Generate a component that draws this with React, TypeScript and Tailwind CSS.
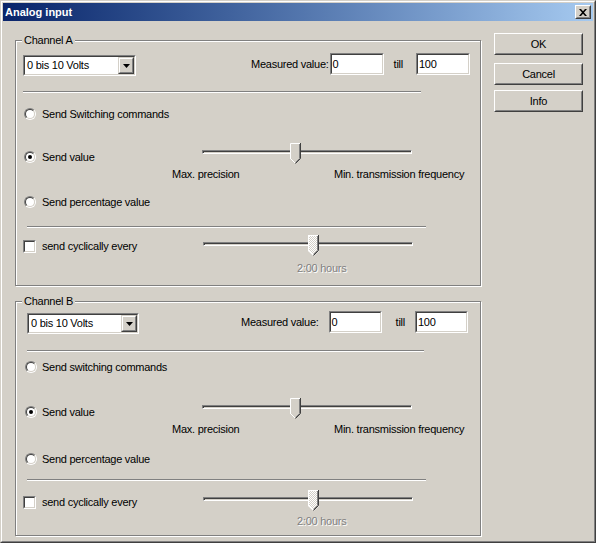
import React from 'react';

type BoxProps = { className?: string; children?: React.ReactNode };

// 2px sunken edge (text boxes, combo, checkbox)
const Sunken: React.FC<BoxProps> = ({ className = '', children }) => (
  <div className={`border border-t-[#808080] border-l-[#808080] border-r-white border-b-white ${className}`}>
    <div className="h-full w-full border border-t-[#404040] border-l-[#404040] border-r-[#d4d0c8] border-b-[#d4d0c8] bg-white">
      {children}
    </div>
  </div>
);

// 2px raised edge (buttons)
const Raised: React.FC<BoxProps> = ({ className = '', children }) => (
  <div className={`border border-t-white border-l-white border-r-[#404040] border-b-[#404040] ${className}`}>
    <div className="flex h-full w-full items-center justify-center border border-t-[#d4d0c8] border-l-[#d4d0c8] border-r-[#808080] border-b-[#808080] bg-[#d4d0c8]">
      {children}
    </div>
  </div>
);

const ComboArrow = () => (
  <div className="h-full w-[16px] border border-t-[#d4d0c8] border-l-[#d4d0c8] border-r-[#404040] border-b-[#404040]">
    <div className="flex h-full w-full items-center justify-center border border-t-white border-l-white border-r-[#808080] border-b-[#808080] bg-[#d4d0c8]">
      <svg width="7" height="4" viewBox="0 0 7 4">
        <path d="M0 0H7L3.5 4Z" fill="#000" />
      </svg>
    </div>
  </div>
);

const Combo: React.FC<{ className?: string }> = ({ className = '' }) => (
  <Sunken className={`h-[21px] ${className}`}>
    <div className="flex h-full items-center">
      <span className="flex-1 pl-[2px]">0 bis 10 Volts</span>
      <ComboArrow />
    </div>
  </Sunken>
);

const TextBox: React.FC<{ value: string; className?: string }> = ({ value, className = '' }) => (
  <Sunken className={`h-[22px] ${className}`}>
    <div className="flex h-full items-center pl-[1px]">{value}</div>
  </Sunken>
);

const Radio: React.FC<{ checked?: boolean }> = ({ checked }) => (
  <div className="h-[12px] w-[12px] shrink-0 rounded-full border border-t-[#808080] border-l-[#808080] border-r-white border-b-white">
    <div className="flex h-full w-full items-center justify-center rounded-full border border-t-[#404040] border-l-[#404040] border-r-[#d4d0c8] border-b-[#d4d0c8] bg-white">
      {checked && <div className="h-[4px] w-[4px] rounded-full bg-black" />}
    </div>
  </div>
);

const Separator: React.FC<{ className?: string }> = ({ className = '' }) => (
  <div className={`h-[2px] border-t border-t-[#808080] border-b border-b-white ${className}`} />
);

const Thumb: React.FC<{ disabled?: boolean; className?: string }> = ({ disabled, className = '' }) => (
  <svg width="11" height="21" viewBox="0 0 11 21" className={`absolute top-0 ${className}`}>
    <defs>
      <pattern id="hatch" width="2" height="2" patternUnits="userSpaceOnUse">
        <rect width="2" height="2" fill="#d4d0c8" />
        <rect width="1" height="1" fill="#fff" />
        <rect x="1" y="1" width="1" height="1" fill="#fff" />
      </pattern>
    </defs>
    <path d="M0 0H11V16L5.5 21L0 16Z" fill={disabled ? 'url(#hatch)' : '#d4d0c8'} />
    <polyline points="0.5,16 0.5,0.5 10,0.5" fill="none" stroke="#fff" />
    <polyline points="0.5,15.5 5,20" fill="none" stroke="#fff" />
    <polyline points="10.5,0 10.5,15.5 5.5,20.5" fill="none" stroke="#404040" />
    <polyline points="9.5,1 9.5,15.5 5.5,19.5" fill="none" stroke="#808080" />
  </svg>
);

const Slider: React.FC<{ thumb: string; disabled?: boolean }> = ({ thumb, disabled }) => (
  <div className="relative h-[21px] w-[210px]">
    <div className="mt-[7px] h-[4px] border border-t-[#808080] border-l-[#808080] border-r-white border-b-white bg-[#d4d0c8] shadow-[inset_1px_1px_0_#404040]" />
    <Thumb disabled={disabled} className={thumb} />
  </div>
);

const Button: React.FC<{ label: string; className?: string }> = ({ label, className = '' }) => (
  <Raised className={`h-[22px] w-[89px] ${className}`}>{label}</Raised>
);

const GroupBox: React.FC<BoxProps & { title: string }> = ({ title, className = '', children }) => (
  <div className={`relative w-[466px] border border-[#808080] shadow-[inset_1px_1px_0_#fff,1px_1px_0_#fff] ${className}`}>
    <span className="absolute -top-[8px] left-[6px] bg-[#d4d0c8] px-[2px] leading-[14px]">{title}</span>
    <div className="flex flex-col">{children}</div>
  </div>
);

const disabledText = 'text-[#808080] [text-shadow:1px_1px_0_#fff]';

export default function App() {
  return (
    <div className="h-[543px] w-[596px] border border-t-[#d4d0c8] border-l-[#d4d0c8] border-r-[#404040] border-b-[#404040] font-['Liberation_Sans',Arial,sans-serif] text-[11px] tracking-[-0.25px] text-black">
      <div className="flex h-full w-full flex-col border border-t-white border-l-white border-r-[#808080] border-b-[#808080] bg-[#d4d0c8] p-[1px]">
        {/* Title bar */}
        <div className="flex h-[18px] items-center bg-linear-to-r from-[#0a246a] to-[#a6caf0] pl-[2px] pr-[2px]">
          <span className="flex-1 font-bold tracking-normal text-white">Analog input</span>
          <Raised className="h-[14px] w-[16px]">
            <svg width="8" height="7" viewBox="0 0 8 7">
              <path d="M0 0H2L4 2.3 6 0H8L5 3.5 8 7H6L4 4.7 2 7H0L3 3.5Z" fill="#000" />
            </svg>
          </Raised>
        </div>

        <div className="flex">
          <div className="flex flex-col pl-[12px]">
            {/* Channel A */}
            <GroupBox title="Channel A" className="mt-[19px] h-[246px]">
              <div className="mt-[12px] flex h-[23px] items-start">
                <Combo className="ml-[7px] mt-[2px] w-[113px]" />
                <span className="ml-auto flex h-[22px] items-center">Measured value:</span>
                <TextBox value="0" className="ml-[1px] w-[54px]" />
                <span className="ml-[10px] flex h-[22px] items-center">till</span>
                <TextBox value="100" className="ml-[13px] mr-[10px] w-[54px]" />
              </div>
              <Separator className="ml-[7px] mt-[15px] w-[398px]" />
              <label className="mt-[13px] flex h-[16px] items-center gap-[6px] pl-[8px]">
                <Radio />
                Send Switching commands
              </label>
              <div className="mt-[21px] flex">
                <div className="w-[186px] pt-[6px]">
                  <label className="flex h-[16px] items-center gap-[6px] pl-[8px]">
                    <Radio checked />
                    Send value
                  </label>
                </div>
                <Slider thumb="left-[88px]" />
              </div>
              <div className="mt-[1px] flex h-[16px] items-center">
                <span className="ml-[156px] w-[162px]">Max. precision</span>
                <span>Min. transmission frequency</span>
              </div>
              <label className="mt-[12px] flex h-[16px] items-center gap-[6px] pl-[8px]">
                <Radio />
                Send percentage value
              </label>
              <Separator className="ml-[11px] mt-[16px] w-[399px]" />
              <div className="mt-[7px] flex">
                <div className="w-[187px] pt-[3px]">
                  <label className="flex h-[16px] items-center gap-[6px] pl-[7px]">
                    <Sunken className="h-[13px] w-[13px] shrink-0" />
                    send cyclically every
                  </label>
                </div>
                <Slider thumb="left-[105px]" disabled />
              </div>
              <div className={`mt-[4px] flex h-[16px] items-center pl-[281px] ${disabledText}`}>2:00 hours</div>
            </GroupBox>

            {/* Channel B */}
            <GroupBox title="Channel B" className="mt-[15px] h-[235px]">
              <div className="mt-[9px] flex h-[23px] items-start">
                <Combo className="ml-[11px] mt-[2px] w-[112px]" />
                <span className="ml-auto flex h-[22px] items-center">Measured value:</span>
                <TextBox value="0" className="ml-[10px] w-[53px]" />
                <span className="ml-[14px] flex h-[22px] items-center">till</span>
                <TextBox value="100" className="ml-[10px] mr-[12px] w-[53px]" />
              </div>
              <Separator className="ml-[11px] mt-[16px] w-[397px]" />
              <label className="mt-[7px] flex h-[16px] items-center gap-[5px] pl-[9px]">
                <Radio />
                Send switching commands
              </label>
              <div className="mt-[23px] flex">
                <div className="w-[186px] pt-[6px]">
                  <label className="flex h-[16px] items-center gap-[5px] pl-[9px]">
                    <Radio checked />
                    Send value
                  </label>
                </div>
                <Slider thumb="left-[88px]" />
              </div>
              <div className="mt-[1px] flex h-[16px] items-center">
                <span className="ml-[156px] w-[162px]">Max. precision</span>
                <span>Min. transmission frequency</span>
              </div>
              <label className="mt-[14px] flex h-[16px] items-center gap-[5px] pl-[9px]">
                <Radio />
                Send percentage value
              </label>
              <Separator className="ml-[11px] mt-[12px] w-[399px]" />
              <div className="mt-[9px] flex">
                <div className="w-[187px] pt-[4px]">
                  <label className="flex h-[16px] items-center gap-[6px] pl-[7px]">
                    <Sunken className="h-[13px] w-[13px] shrink-0" />
                    send cyclically every
                  </label>
                </div>
                <Slider thumb="left-[105px]" disabled />
              </div>
              <div className={`mt-[2px] flex h-[16px] items-center pl-[281px] ${disabledText}`}>2:00 hours</div>
            </GroupBox>
          </div>

          {/* Buttons */}
          <div className="ml-[13px] mt-[12px] flex flex-col">
            <Button label="OK" />
            <Button label="Cancel" className="mt-[8px]" />
            <Button label="Info" className="mt-[5px]" />
          </div>
        </div>
      </div>
    </div>
  );
}
